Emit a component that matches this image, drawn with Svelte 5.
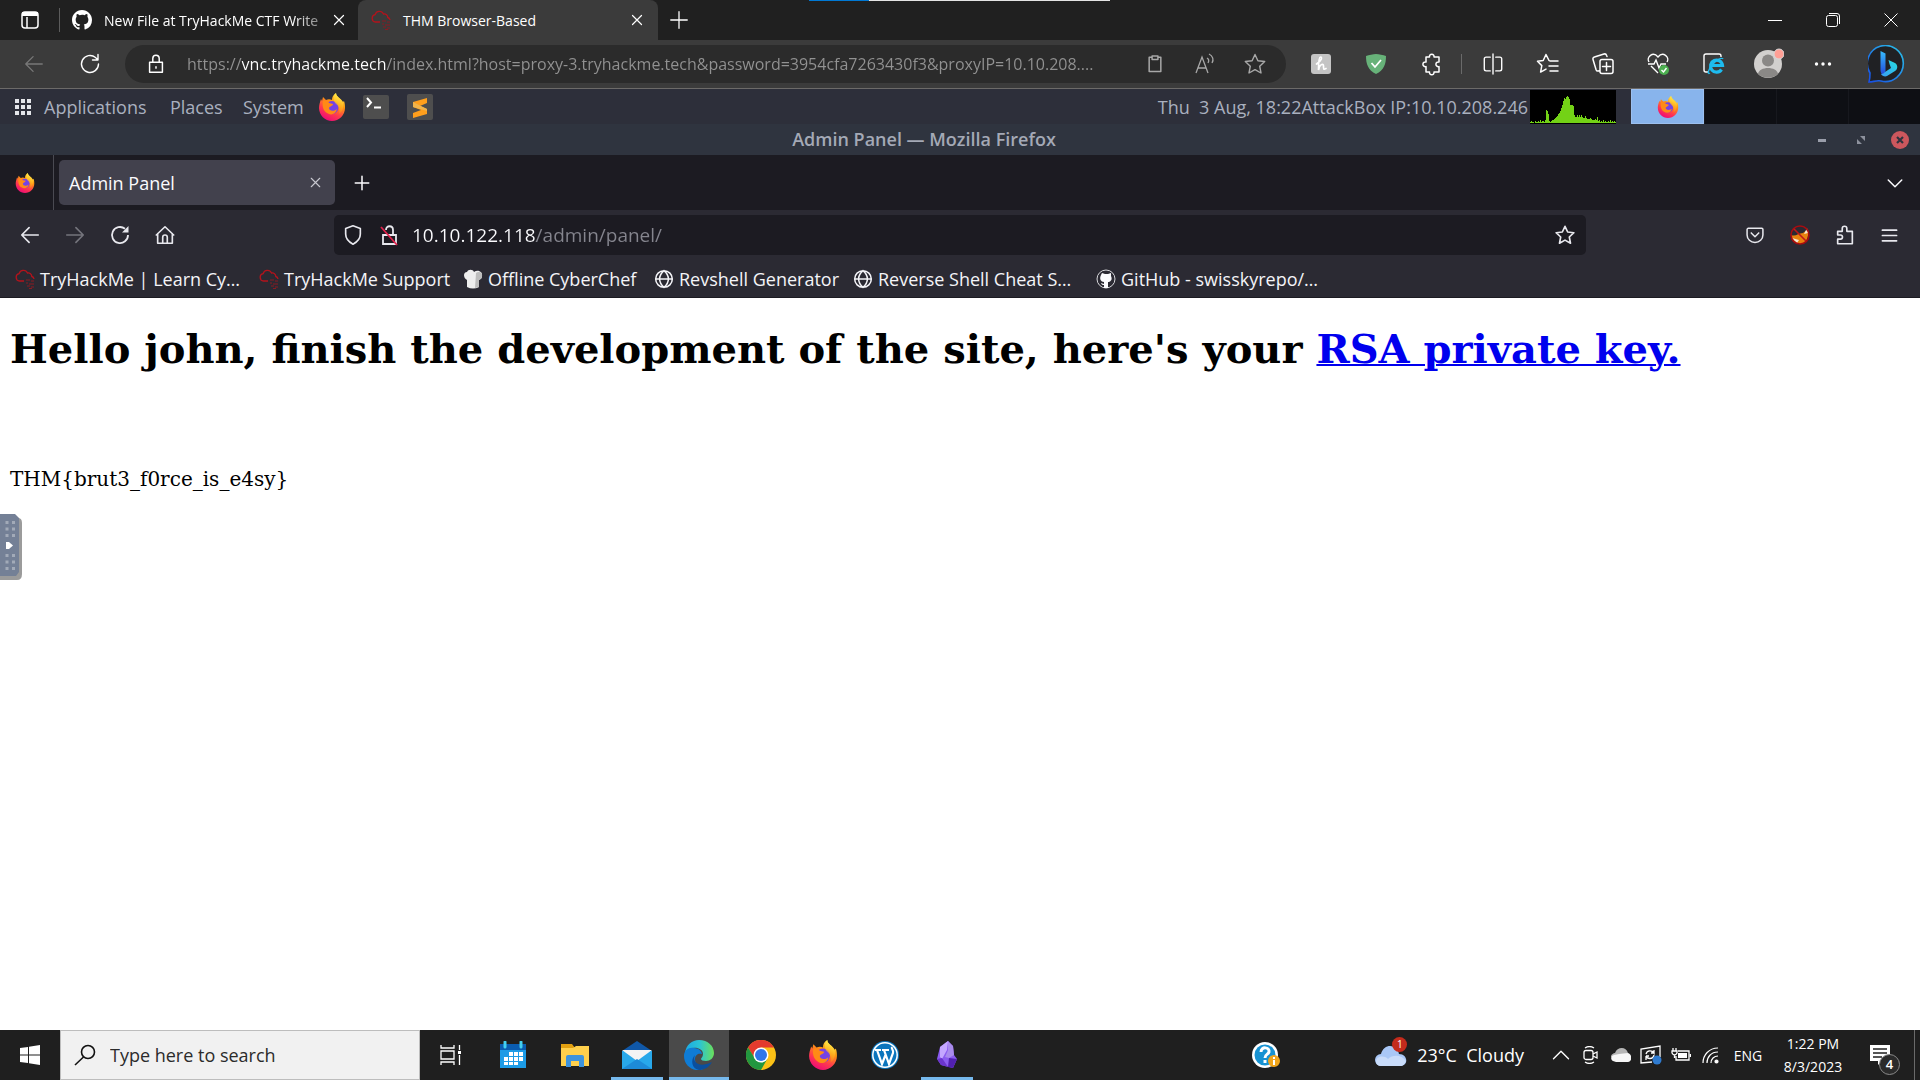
<script>
  let address = $state('https://vnc.tryhackme.tech/index.html?host=proxy-3.tryhackme.tech&password=3954cfa7263430f3&proxyIP=10.10.208....');
  let location = $state('10.10.122.118/admin/panel/');
  let query = $state('');

  const icons = {
    close: 'M6 6l12 12M18 6L6 18',
    plus: 'M12 3v18M3 12h18',
    back: 'M21 12H3M11 4l-8 8 8 8',
    forward: 'M3 12h18M13 4l8 8-8 8',
    reload: 'M20.500 12a8.500 8.500 0 1 1-3-6.500L20 8M20 2.500V8h-5.500',
    lock: 'M5 10h14v11H5zM8.500 10V6a3.500 3.500 0 0 1 7 0v4M12 15v1.500',
    clipboard: 'M8 4H5v17h14V4h-3M8.500 2.500h7v4h-7z',
    star: 'M12 2.500l2.900 6.200 6.800.8-5 4.700 1.300 6.800-6-3.400-6 3.400 1.300-6.800-5-4.700 6.800-.8z',
    puzzle: 'M7 5h3.500a2.300 2.300 0 1 1 4.500 0H20v5a2.400 2.400 0 1 0 0 4.600V20h-5a2.300 2.300 0 1 1-4.500 0H7v-5.400a2.400 2.400 0 1 1 0-4.600z',
    split: 'M9 4.500H4.500a2 2 0 0 0-2 2v11a2 2 0 0 0 2 2H9M15 4.500h4.500a2 2 0 0 1 2 2v11a2 2 0 0 1-2 2H15M12 1v22',
    favorites: 'M13 8.500l-3-6-2.800 6-5.700.8 4.300 4.300-1.200 6.500 5.400-3M14 9h8M13 14h9M14 19h8',
    collections: 'M9 18.500l-1.500.5a2 2 0 0 1-2.400-1.300L2 7.500A2 2 0 0 1 3.400 5L13 2a2 2 0 0 1 2.500 1.300l.5 1.200M11 7.500h9a2 2 0 0 1 2 2v10a2 2 0 0 1-2 2h-9a2 2 0 0 1-2-2v-10a2 2 0 0 1 2-2zM15.500 10.500v8M11.500 14.500h8',
    home: 'M4 10.500V21h16V10.500M2.500 12L12 3l9.500 9M9.500 21v-6.500a2.500 2.500 0 0 1 5 0V21',
    shield: 'M12 2l8 3v6c0 5-3 8.500-8 11-5-2.500-8-6-8-11V5z',
    pocket: 'M4 4h16a1.500 1.500 0 0 1 1.500 1.500V12a9.500 9 0 0 1-19 0V5.500A1.500 1.500 0 0 1 4 4zM7.500 9.500L12 14l4.500-4.500',
    extension: 'M4 8h5V5a2.500 2.500 0 0 1 5 0v3h6v13.500H4v-5h3a2.200 2.200 0 1 0 0-4.500H4z',
    menu: 'M2 4.500h20M2 12h20M2 19.500h20',
    down: 'M3 8l9 9 9-9',
    up: 'M2 17l10-10 10 10',
    globe: 'M12 2a10 10 0 1 0 0 20 10 10 0 0 0 0-20zM12 2c-7 6-7 14 0 20M12 2c7 6 7 14 0 20M2 12h20'
  };

  const links = [
    { icon: 'cloud', label: 'TryHackMe | Learn Cy…', width: 244 },
    { icon: 'cloud', label: 'TryHackMe Support', width: 204 },
    { icon: 'chef', label: 'Offline CyberChef', width: 191 },
    { icon: 'globe', label: 'Revshell Generator', width: 199 },
    { icon: 'globe', label: 'Reverse Shell Cheat S…', width: 243 },
    { icon: 'github', label: 'GitHub - swisskyrepo/…', width: 230 }
  ];

  const load = [1,2,1,1,0,2,1,1,2,1,3,1,2,2,1,3,13,12,9,2,1,2,3,3,4,5,6,7,9,10,12,15,18,22,25,24,26,27,26,24,18,18,18,17,8,6,6,8,6,8,6,8,6,5,5,7,5,4,4,4,5,4,3,3,3,4,3,6,2,3,1,2,1,3,1,2,1,1,2,1,3,1,2,1,2,1];
</script>

{#snippet line(name, size, weight)}
  <svg width={size} height={size} viewBox="0 0 24 24" fill="none" stroke="currentColor" stroke-width={weight} stroke-linejoin="round" stroke-linecap="round" aria-hidden="true"><path d={icons[name]} /></svg>
{/snippet}

{#snippet firefox(size)}
  <svg width={size} height={size} viewBox="0 0 28 28" aria-hidden="true">
    <defs>
      <linearGradient id="ffBody" x1=".8" y1="0" x2=".3" y2="1"><stop offset="0" stop-color="#fff44f" /><stop offset=".35" stop-color="#ff980e" /><stop offset=".7" stop-color="#ff3750" /><stop offset="1" stop-color="#eb0878" /></linearGradient>
      <linearGradient id="ffFlame" x1=".7" y1="0" x2=".5" y2="1"><stop offset="0" stop-color="#fff44f" /><stop offset="1" stop-color="#ff980e" stop-opacity=".4" /></linearGradient>
    </defs>
    <path fill="url(#ffBody)" d="M3 6l1 2 1-4 3 3c2-1 4-1 6 0 0-3 1-5 4-7 0 4 5 5 7 9l1-1c1 3 1 5 1 7 0 7-6 13-13 13S1 22 1 15c0-3 1-6 2-9z" />
    <circle cx="14" cy="14.500" r="6.500" fill="#7542e5" />
    <path fill="#ff8a16" d="M5 8c3-1 5 0 6 2l4 1c0 2-3 2-4 4 0 3 5 4 8 1-1 5-6 7-10 4-4-2-5-8-4-12z" />
    <path fill="url(#ffFlame)" d="M18 0c0 4 5 5 7 10 1 5-1 9-4 11 1-4 0-8-3-10-3-3-3-8 0-11z" />
  </svg>
{/snippet}

{#snippet cloud()}
  <svg width="20" height="20" viewBox="0 0 20 20" fill="none" aria-hidden="true">
    <path d="M9 12H4.500a3.700 3.700 0 0 1-.4-7.300A4.500 4.500 0 0 1 12.500 4a3.500 3.500 0 0 1 4.300 3.500A3 3 0 0 1 19 10" stroke="#b3131c" stroke-width="1.300" />
    <path d="M11 11h4M16 12h3M11 14h2M14 15h5M12 17h3M16 18h3M14 19.500h3" stroke="#8b1a22" stroke-width="1.200" />
  </svg>
{/snippet}

{#snippet github(size)}
  <svg width={size} height={size} viewBox="0 0 16 16" fill="currentColor" aria-hidden="true"><path d="M8 0C3.580 0 0 3.580 0 8c0 3.540 2.290 6.530 5.470 7.590.4.070.55-.17.55-.38v-1.490c-2.010.37-2.530-.49-2.690-.94-.09-.23-.48-.94-.82-1.130-.28-.15-.68-.52-.01-.53.63-.01 1.080.58 1.230.82.72 1.210 1.870.87 2.330.66.070-.52.28-.87.510-1.070-1.780-.2-3.640-.89-3.640-3.950 0-.87.31-1.590.82-2.150-.08-.2-.36-1.020.08-2.120 0 0 .67-.21 2.200.82A7.600 7.600 0 0 1 8 3.860c.68 0 1.360.09 2 .27 1.530-1.040 2.200-.82 2.200-.82.44 1.100.16 1.920.08 2.120.51.56.82 1.270.82 2.150 0 3.070-1.870 3.750-3.650 3.950.29.25.54.73.54 1.480v2.200c0 .21.15.46.55.38A8 8 0 0 0 16 8c0-4.420-3.580-8-8-8z" /></svg>
{/snippet}

<div class="screen">
  <header class="edge">
    <div class="strip" aria-hidden="true"><i></i></div>
    <div class="edge-tabs">
      <button class="workspaces" aria-label="Tab actions">
        <svg width="20" height="20" viewBox="0 0 20 20" fill="none" stroke="currentColor" stroke-width="1.500" aria-hidden="true"><rect x="2" y="2" width="16" height="16" rx="3" /><path d="M2 4.500h16M2 3.500h16" stroke-width="3" /><path d="M7 7v11" /></svg>
      </button>
      <div class="tab idle">
        {@render github(20)}
        <span class="name fade">New File at TryHackMe CTF Write</span>
        <button aria-label="Close tab">{@render line('close', 18, 1.6)}</button>
      </div>
      <div class="tab current">
        {@render cloud()}
        <span class="name">THM Browser-Based</span>
        <button aria-label="Close tab">{@render line('close', 18, 1.6)}</button>
      </div>
      <button class="new" aria-label="New tab">{@render line('plus', 22, 1.4)}</button>
      <div class="win">
        <button aria-label="Minimize"><svg width="14" height="14" viewBox="0 0 14 14" stroke="currentColor" aria-hidden="true"><path d="M0 7.500h14" /></svg></button>
        <button aria-label="Restore"><svg width="14" height="14" viewBox="0 0 14 14" fill="none" stroke="currentColor" aria-hidden="true"><rect x=".5" y="2.500" width="11" height="11" rx="2" /><path d="M3 .5h8a2.500 2.500 0 0 1 2.500 2.500v8" /></svg></button>
        <button aria-label="Close"><svg width="14" height="14" viewBox="0 0 14 14" stroke="currentColor" aria-hidden="true"><path d="M.5.5l13 13M13.500.5l-13 13" /></svg></button>
      </div>
    </div>
    <div class="edge-bar">
      <button class="nav dim" aria-label="Back">{@render line('back', 22, 1.4)}</button>
      <button class="nav" aria-label="Refresh">{@render line('reload', 24, 1.4)}</button>
      <div class="omni">
        <button class="site" aria-label="Site information">{@render line('lock', 22, 1.6)}</button>
        <input class="url" aria-label="Address" bind:value={address} />
        <button aria-label="Copy">{@render line('clipboard', 20, 1.8)}</button>
        <button aria-label="Read aloud"><svg width="24" height="24" viewBox="0 0 24 24" fill="none" stroke="currentColor" stroke-width="1.300" aria-hidden="true"><path d="M3 21L9 5l6 16M5 16h8M14 6c2 1 2 3 1 5M16 2c4 2 5 6 3 9" /></svg></button>
        <button aria-label="Add to favorites">{@render line('star', 24, 1.4)}</button>
      </div>
      <div class="tools">
        <button aria-label="Honey"><svg width="22" height="22" viewBox="0 0 22 22" aria-hidden="true"><rect x="1" y="1" width="20" height="20" rx="3" fill="#c4c4c4" /><path d="M6.500 11c5-3 6-7 4-7s-2 7-2 13c1-6 5-7 5-4s0 4 2.500 2.500" fill="none" stroke="#fff" stroke-width="1.700" stroke-linecap="round" /></svg></button>
        <button aria-label="Ad blocker"><svg width="22" height="22" viewBox="0 0 22 22" aria-hidden="true"><path fill="#67b279" d="M11 1c3 0 7 1 10 2 0 8-2 14-10 18C3 17 1 11 1 3c3-1 7-2 10-2z" /><path d="M6.500 10l3.500 4 6-7" fill="none" stroke="#fff" stroke-width="1.800" /></svg></button>
        <button aria-label="Extensions">{@render line('puzzle', 24, 1.5)}</button>
        <span class="rule"></span>
        <button aria-label="Split screen">{@render line('split', 22, 1.5)}</button>
        <button aria-label="Favorites">{@render line('favorites', 24, 1.5)}</button>
        <button aria-label="Collections">{@render line('collections', 24, 1.5)}</button>
        <button aria-label="Browser essentials"><svg width="24" height="24" viewBox="0 0 24 24" fill="none" stroke="currentColor" stroke-width="1.400" aria-hidden="true"><path d="M3 10C0 5 7-1 12 5c5-6 12 0 9 5M2 12h6l2-4 3 8 2-4h5M5 14l7 7" /><circle cx="18" cy="18" r="5" fill="#4caf50" stroke="none" /><path d="M15.500 18l2 2 3-4" /></svg></button>
        <button aria-label="Internet Explorer mode"><svg width="24" height="24" viewBox="0 0 24 24" fill="none" aria-hidden="true"><path d="M7 20H5a2 2 0 0 1-2-2V4a2 2 0 0 1 2-2h13a2 2 0 0 1 2 2v1" stroke="currentColor" stroke-width="1.400" /><path d="M20.500 17.500a6 6 0 1 1 1-4h-11" stroke="#1ebbee" stroke-width="3.200" /><path d="M9 21c-3 2-2-3 2-8s10-8 11-6" stroke="#1ebbee" stroke-width="1.400" /></svg></button>
        <button aria-label="Profile"><svg width="32" height="32" viewBox="0 0 32 32" aria-hidden="true"><circle cx="16" cy="16" r="14" fill="#d2d0ce" /><circle cx="16" cy="12.500" r="6" fill="#8a8886" /><path d="M6 26c1-8 19-8 20 0-5 5-15 5-20 0z" fill="#8a8886" /><circle cx="27" cy="6" r="5" fill="#ff9f95" stroke="#d8d8d8" /></svg></button>
        <button aria-label="Settings and more"><svg width="20" height="20" viewBox="0 0 20 20" fill="currentColor" aria-hidden="true"><circle cx="3.500" cy="10" r="1.700" /><circle cx="10" cy="10" r="1.700" /><circle cx="16.500" cy="10" r="1.700" /></svg></button>
      </div>
      <button class="bing" aria-label="Bing Chat"><svg width="38" height="38" viewBox="0 0 38 38" aria-hidden="true">
        <defs><linearGradient id="bing" x1="1" y1="0" x2="0" y2="1"><stop offset="0" stop-color="#2bc4e8" /><stop offset="1" stop-color="#174ae4" /></linearGradient><linearGradient id="bingBar" x2="0" y2="1"><stop stop-color="#37bdff" /><stop offset="1" stop-color="#2247d8" /></linearGradient><linearGradient id="bingFold" x1="1" x2="0" y2="1"><stop stop-color="#25dfe0" /><stop offset="1" stop-color="#3a9bf4" /></linearGradient></defs>
        <path d="M1 37c1-3 1-6 1-9A18 18 0 1 1 13 36c-4-1-8 1-12 1z" fill="#202124" stroke="url(#bing)" stroke-width="1.600" />
        <path d="M12.500 6l5 2.500V26c0 2-1 4-3 4-1-1-2-3-2-5z" fill="url(#bingBar)" /><path d="M20.500 15l6.500 3c3 2 3 6 0 8l-8 5c-2 1-5 0-6-2 2 0 3-1 4-2l6-4-1.500-4z" fill="url(#bingFold)" />
      </svg></button>
    </div>
  </header>

  <nav class="panel" aria-label="Desktop panel">
    <svg class="grid" width="16" height="18" viewBox="0 0 16 18" fill="#e4e6ea" aria-hidden="true"><path d="M0 1h4v4H0zM6 1h4v4H6zM12 1h4v4h-4zM0 7h4v4H0zM6 7h4v4H6zM12 7h4v4h-4zM0 13h4v4H0zM6 13h4v4H6zM12 13h4v4h-4z" /></svg>
    <button class="m1">Applications</button>
    <button class="m2">Places</button>
    <button class="m3">System</button>
    <button class="app" aria-label="Firefox">{@render firefox(28)}</button>
    <button class="app" aria-label="Terminal"><svg width="26" height="24" viewBox="0 0 26 24" aria-hidden="true"><rect width="26" height="24" rx="2" fill="#4e4e4e" /><path d="M4 3l4 4.500L4 12M11 12.500h7" fill="none" stroke="#fff" stroke-width="2" /></svg></button>
    <button class="app" aria-label="Sublime Text"><svg width="26" height="26" viewBox="0 0 26 26" aria-hidden="true"><rect width="26" height="26" rx="2" fill="#4e4e4e" /><path d="M20 4v5l-7 3 7 3v5L6 24v-5l8-3-8-3V8z" fill="#ff9f1c" /><path d="M6 8v5l14 4v-2z" fill="#f0b44c" /></svg></button>
    <span class="clock">Thu&nbsp; 3 Aug, 18:22AttackBox IP:10.10.208.246</span>
    <svg class="load" width="86" height="34" viewBox="0 0 86 34" shape-rendering="crispEdges" aria-hidden="true"><rect width="86" height="34" fill="#000" />{#each load as h, i}<rect x={i} y={33 - h} width="1" height={h} fill="#73d216" />{/each}</svg>
    <div class="spaces">
      <button class="on" aria-label="Workspace 1">{@render firefox(22)}</button>
      <button aria-label="Workspace 2"></button>
      <button aria-label="Workspace 3"></button>
      <button aria-label="Workspace 4"></button>
    </div>
  </nav>

  <div class="title">
    <span>Admin Panel — Mozilla Firefox</span>
    <button aria-label="Minimize window"><svg width="16" height="16" viewBox="0 0 16 16" aria-hidden="true"><path d="M4 7h8v3H4z" fill="#9a9eaa" /></svg></button>
    <button aria-label="Maximize window"><svg width="16" height="16" viewBox="0 0 16 16" fill="#8d919d" aria-hidden="true"><path d="M7 4h5v5zM4 7v5h5z" /></svg></button>
    <button aria-label="Close window"><svg width="18" height="18" viewBox="0 0 18 18" aria-hidden="true"><circle cx="9" cy="9" r="9" fill="#cc575d" /><path d="M6 6l6 6M12 6l-6 6" stroke="#2f343f" stroke-width="2.200" /></svg></button>
  </div>

  <div class="ff-tabs">
    <span class="view">{@render firefox(20)}</span>
    <div class="ff-tab"><span>Admin Panel</span><button aria-label="Close Admin Panel">{@render line('close', 17, 1.6)}</button></div>
    <button class="ff-new" aria-label="Open a new tab">{@render line('plus', 18, 2)}</button>
    <button class="list" aria-label="List all tabs">{@render line('down', 18, 2)}</button>
  </div>

  <div class="ff-bar">
    <button class="step" aria-label="Go back">{@render line('back', 22, 1.8)}</button>
    <button class="step faint" aria-label="Go forward">{@render line('forward', 22, 1.8)}</button>
    <button class="step" aria-label="Reload page"><svg width="22" height="22" viewBox="0 0 22 22" fill="none" stroke="currentColor" stroke-width="1.800" aria-hidden="true"><path d="M19 11a8 8 0 1 1-3-6.200" /><path d="M19.500 2v6.500H13z" fill="currentColor" stroke="none" /></svg></button>
    <button class="step" aria-label="Home">{@render line('home', 22, 1.8)}</button>
    <div class="loc">
      <button aria-label="Tracking protection">{@render line('shield', 22, 1.8)}</button>
      <button aria-label="Connection not secure"><svg width="22" height="22" viewBox="0 0 22 22" fill="none" stroke="currentColor" stroke-width="1.800" aria-hidden="true"><path d="M5 11h13v9H5zM8 6c0-5 7-5 7 0v5" /><path d="M3 3l16 18" stroke="#e2224c" /></svg></button>
      <input aria-label="Search or enter address" bind:value={location} />
      <button aria-label="Bookmark this page">{@render line('star', 22, 1.8)}</button>
    </div>
    <div class="ff-tools">
      <button aria-label="Pocket">{@render line('pocket', 20, 1.8)}</button>
      <button aria-label="FoxyProxy"><svg width="20" height="20" viewBox="0 0 20 20" aria-hidden="true"><path d="M1 10c0 6 5 9 9 9 6 0 9-6 8-15l-5 4C8 8 6 12 1 10z" fill="#e8820e" /><path d="M17 3l1 5-4 1zM2 13l5 5 2-3z" fill="#f5e6d0" /><circle cx="10" cy="10" r="9" fill="none" stroke="#a80c10" stroke-width="1.600" /><path d="M4 4l12 12" stroke="#c01818" stroke-width="1.600" /></svg></button>
      <button aria-label="Extensions">{@render line('extension', 22, 1.8)}</button>
      <button aria-label="Open application menu">{@render line('menu', 17, 2.400)}</button>
    </div>
  </div>

  <nav class="marks" aria-label="Bookmarks">
    {#each links as l}
      <a href="#{l.icon}" style:width="{l.width}px">
        {#if l.icon === 'cloud'}{@render cloud()}
        {:else if l.icon === 'github'}<svg width="20" height="20" viewBox="0 0 20 20" aria-hidden="true"><circle cx="10" cy="10" r="9" fill="none" stroke="#d8d8dc" /><path d="M5 6l1-2 3 1h3l3-1v3c2 4-1 6-3 6v6H8v-3c-3 0-3-2-3-2l3 1v-2c-3 0-5-3-3-7z" fill="#fbfbfe" /></svg>
        {:else if l.icon === 'chef'}<svg width="20" height="20" viewBox="0 0 20 20" aria-hidden="true"><path d="M4 18V11C0 9 0 3 4 3c1-3 6-3 7 0 4-3 9 0 8 4 0 2-1 3-3 4v7c-4 2-8 2-12 0z" fill="#eee" /><path d="M13 4c2-2 7-1 6 3 0 2-1 3-3 4v7l-4 1z" fill="#bdbdbd" /></svg>
        {:else}{@render line('globe', 20, 1.8)}{/if}
        <span>{l.label}</span>
      </a>
    {/each}
  </nav>

  <main>
    <h1>Hello john, finish the development of the site, here's your <a href="#key">RSA private key.</a></h1>
    <p>THM{'{'}brut3_f0rce_is_e4sy{'}'}</p>
    <button class="handle" aria-label="Open control bar"><svg width="22" height="66" viewBox="0 0 22 66" aria-hidden="true">
      <path d="M0 4h18q4 0 4 5v51q0 6-5 6H0z" fill="#9b9b9b" /><path d="M0 0h15l4 4v54l-3 4H0z" fill="#748096" />
      <path d="M7 7v16M13.500 7v16M7 40v16M13.500 40v16" stroke="#a2aab8" stroke-width="3" stroke-dasharray="3 3.500" /><path d="M6 28h3l4 3.500L9 35H6z" fill="#fff" />
    </svg></button>
  </main>

  <footer>
    <button class="start" aria-label="Start"><svg width="20" height="20" viewBox="0 0 20 20" fill="#fff" aria-hidden="true"><path d="M0 3l8-1v7.500H0zM9 1.800L20 0v9.500H9zM0 10.500h8V18l-8-1zM9 10.500h11V20L9 18.200z" /></svg></button>
    <label class="search"><svg width="22" height="22" viewBox="0 0 22 22" fill="none" stroke="#111" stroke-width="1.600" aria-hidden="true"><circle cx="14" cy="8" r="6.500" /><path d="M9.500 13L1 21" /></svg><input aria-label="Search" placeholder="Type here to search" bind:value={query} /></label>
    <div class="apps">
      <button aria-label="Task View"><svg width="22" height="20" viewBox="0 0 22 20" fill="none" stroke="#fff" stroke-width="1.300" aria-hidden="true"><path d="M1 0v3h13V0M1 20v-3h13v3M1 6h13v8H1zM19.500 0v5M19.500 10v10" /><path d="M18 6h3v3h-3z" fill="#fff" stroke="none" /></svg></button>
      <button aria-label="Calendar"><svg width="28" height="28" viewBox="0 0 28 28" aria-hidden="true"><path d="M1 3h26v24H1z" fill="#1c9be6" /><path d="M1 3h26v6H1z" fill="#0a5cb0" /><path d="M10 11h4v4h-4zM15 11h4v4h-4zM20 11h4v4h-4zM5 16h4v4H5zM10 16h4v4h-4zM15 16h4v4h-4zM20 16h4v4h-4zM5 21h4v3H5zM10 21h4v3h-4zM15 21h4v3h-4z" fill="#fff" /><path d="M9.500 10v15M14.500 10v15M19.500 10v15M4 15.500h21M4 20.500h21" stroke="#1c9be6" /><path d="M6 1v5M22 1v5" stroke="#43d0f0" stroke-width="3" stroke-linecap="round" /></svg></button>
      <button aria-label="File Explorer"><svg width="28" height="24" viewBox="0 0 28 24" aria-hidden="true"><path d="M0 1h11l3 4H0z" fill="#e2a010" /><path d="M0 5h12l3-2h13v20H0z" fill="#ffd04c" /><path d="M5 24V14q0-2 2-2h14q2 0 2 2v10h-5v-6h-8v6z" fill="#3d93dc" /></svg></button>
      <button class="run" aria-label="Mail"><svg width="32" height="28" viewBox="0 0 32 28" aria-hidden="true"><path d="M1 10L16 0l15 10z" fill="#1058a8" /><path d="M1 10h30v18H1z" fill="#28a8ea" /><path d="M1 9h30L16 20z" fill="#f4f4f4" /><path d="M1 28l15-10 15 10z" fill="#1d8bd8" /></svg></button>
      <button class="run active" aria-label="Microsoft Edge"><svg width="30" height="30" viewBox="0 0 30 30" aria-hidden="true">
        <defs><linearGradient id="edgeTop"><stop stop-color="#1ba9e5" /><stop offset=".5" stop-color="#2bc4d4" /><stop offset="1" stop-color="#6be05a" /></linearGradient></defs>
        <path d="M1 13C2 5 8 0 15 0c9 0 15 6 15 13 0 5-4 8-8 8-3 0-5-1-5-2s2-2 2-5c0-7-13-9-18-1z" fill="url(#edgeTop)" /><path d="M0 16C0 10 5 7 10 8c5 0 8 4 8 6-7-2-9 6-5 11 2 3 5 5 7 4-10 4-20-3-20-13z" fill="#0f7cd6" /><path d="M11 15c-3 6 3 14 17 7-3 6-9 8-13 8-7-1-9-10-4-15z" fill="#0b4f9d" /></svg></button>
      <button aria-label="Google Chrome"><svg width="30" height="30" viewBox="0 0 30 30" aria-hidden="true"><circle cx="15" cy="15" r="15" fill="#fbc116" /><path d="M2 7.500A15 15 0 0 1 28 7.500H15L9 19z" fill="#e33b2e" /><path d="M2 7.500A15 15 0 0 0 15 30l6.500-11.500H9z" fill="#22973f" /><circle cx="15" cy="15" r="7.500" fill="#fff" /><circle cx="15" cy="15" r="6" fill="#2f76e8" /></svg></button>
      <button aria-label="Mozilla Firefox">{@render firefox(30)}</button>
      <button aria-label="WordPress"><svg width="28" height="28" viewBox="0 0 28 28" aria-hidden="true"><circle cx="14" cy="14" r="14" fill="#0b75bd" /><circle cx="14" cy="14" r="12.200" fill="none" stroke="#fff" stroke-width="1.500" /><path d="M4 9h6M11 9h7M6 9l5 14 3.500-9M13 9l5 14 4-11c1-3-2-4-1-6" fill="none" stroke="#fff" stroke-width="2.200" /></svg></button>
      <button class="run" aria-label="Obsidian"><svg width="20" height="28" viewBox="0 0 20 28" aria-hidden="true"><path d="M11 0l5 5 1 9 3 4-4 9-12-3-4-6 3-12z" fill="#8b5cf0" /><path d="M11 0l-1 9-5 9-2-2V6z" fill="#c4a7ff" /><path d="M11 0l5 5 1 9-5 3-4-1 3-7z" fill="#a98bec" /><path d="M0 18l5-1 6 9-7-2z" fill="#6b35cd" /><path d="M12 17l8 1-4 9-5-1z" fill="#5120b0" /></svg></button>
    </div>
    <div class="tray">
      <button class="help" aria-label="Help"><svg width="28" height="28" viewBox="0 0 28 28" aria-hidden="true"><circle cx="13" cy="14" r="13" fill="#fff" /><circle cx="13" cy="14" r="10.500" fill="#1792d2" /><path d="M9 11c0-6 9-5 8 0-1 3-4 2-4 6M13 19v3" fill="none" stroke="#fff" stroke-width="3" /><circle cx="22" cy="20" r="6" fill="#f0a51c" /><path d="M22 16v2M22 19v5" stroke="#fff" stroke-width="2" /></svg></button>
      <button class="weather"><span class="sky"><svg width="32" height="22" viewBox="0 0 32 22" aria-hidden="true"><path d="M6 21a6 6 0 0 1 0-12C9-2 22-1 24 9c9 0 10 12 1 12z" fill="#a9c7f6" /><path d="M1 17c0-6 8-7 12-3 5-5 14-4 18 2-1 3-3 5-6 5H6c-3 0-5-2-5-4z" fill="#c9dcfa" /></svg><b>1</b></span><span>23°C&nbsp; Cloudy</span></button>
      <button class="slot" aria-label="Show hidden icons">{@render line('up', 18, 1.8)}</button>
      <button class="slot" aria-label="Meet Now"><svg width="16" height="18" viewBox="0 0 16 18" fill="none" stroke="#fff" stroke-width="1.300" aria-hidden="true"><rect x="1" y="4.500" width="9" height="9" rx="2" /><path d="M10 8l4-2v6l-4-2M2 2c3-2 6-2 9 0M2 16c3 2 6 2 9 0" /></svg></button>
      <button class="slot" aria-label="OneDrive"><svg width="20" height="14" viewBox="0 0 20 14" aria-hidden="true"><path d="M0 9c0-3 3-4 4-4 2-6 11-7 13 0L8 13z" fill="#b5b5b5" /><path d="M2 13c-3-2-2-5 1-6l5-1 9-1c5 2 4 9 0 9H5z" fill="#f6f6f6" /></svg></button>
      <button class="slot" aria-label="Updates"><svg width="22" height="20" viewBox="0 0 22 20" fill="none" stroke="#fff" stroke-width="1.300" aria-hidden="true"><path d="M12 17L1 18V4l19-3v11M6 9c1-4 6-4 8-1V5M14 8h-3M14 10c-1 5-7 4-8 1v4M6 11h3" /><circle cx="17" cy="15" r="4.500" fill="#2f7bd0" stroke="none" /></svg></button>
      <button class="slot" aria-label="Battery"><svg width="20" height="14" viewBox="0 0 20 14" fill="none" stroke="#fff" stroke-width="1.300" aria-hidden="true"><path d="M7 3h11v9H5V8M19.500 6v3M1 3h5v2q-1 2-2.500 2T1 5zM2 3V0M5 3V0M3.500 7v3" /><path d="M7 5h9v5H7z" fill="#fff" stroke="none" /></svg></button>
      <button class="slot" aria-label="Network"><svg width="18" height="18" viewBox="0 0 18 18" fill="none" stroke="#fff" stroke-width="1.200" aria-hidden="true"><path d="M1 17C1 9 7 2 16 2M5 17c0-6 4-11 11-11M9 17c0-4 3-7 7-7" /><circle cx="14.500" cy="15.500" r="1.500" fill="#fff" /></svg></button>
      <button class="lang">ENG</button>
      <button class="time"><span>1:22 PM</span><span>8/3/2023</span></button>
      <button class="notes" aria-label="4 notifications"><svg width="20" height="20" viewBox="0 0 20 20" aria-hidden="true"><path d="M0 0h20v16h-8l-4 4v-4H0z" fill="#fff" /><path d="M3 4h14M3 8h14M3 12h9" stroke="#1f1f1f" stroke-width="1.300" /></svg><b>4</b></button>
    </div>
  </footer>
</div>

<style>
  :global(body) { background: #fff; }
  .screen { display: flex; flex-direction: column; min-height: 100vh; font-family: "Open Sans", "Noto Sans", sans-serif; font-size: 14px; color: #fff; }
  button { display: flex; align-items: center; justify-content: center; flex: none; margin: 0; padding: 0; border: 0; background: none; color: inherit; font: inherit; }
  svg { display: block; flex: none; }
  input { flex: 1; min-width: 0; padding: 0; border: 0; outline: 0; background: none; font: inherit; color: inherit; }

  .edge { position: relative; border-bottom: 1px solid #6c6a68; }
  .strip { position: absolute; top: 0; left: 809px; width: 301px; height: 1px; background: #e4e4e4; }
  .strip i { display: block; width: 60px; height: 1px; background: #0078d4; }
  .edge-tabs { display: flex; height: 40px; background: #202020; }
  .workspaces { width: 60px; border-right: 1px solid #5c5c5c; height: 24px; margin: 8px 0; }
  .tab { display: flex; align-items: center; gap: 12px; box-sizing: border-box; }
  .tab.idle { width: 298px; padding: 0 10px 0 12px; }
  .tab.idle button { margin-left: -8px; }
  .tab.current { width: 300px; padding: 0 12px 0 13px; background: #3b3b3b; border-radius: 8px 8px 0 0; }
  .name { flex: 1; white-space: nowrap; }
  .fade { mask-image: linear-gradient(90deg, #000 85%, rgba(0, 0, 0, .3)); }
  .new { width: 42px; }
  .win { display: flex; margin-left: auto; }
  .win button { width: 58px; }
  .edge-bar { display: flex; align-items: center; height: 48px; background: #3b3b3b; }
  .nav { width: 44px; }
  .nav:first-child { width: 68px; }
  .dim { color: #787878; }
  .omni { flex: 1; display: flex; align-items: center; height: 38px; border-radius: 19px; background: #2b2b2b; color: #a8a8a8; margin-left: 13px; padding-right: 6px; }
  .omni button { width: 50px; }
  .omni .site { width: 62px; color: #fff; }
  .url { font-size: 16px; color: #9a9a9a; -webkit-text-fill-color: transparent; background: linear-gradient(90deg, #929292 55px, #fff 55px 199px, #929292 199px); background-clip: text; }
  .tools { display: flex; align-items: center; padding: 0 4px 0 7px; }
  .tools button { width: 55px; }
  .rule { width: 1px; height: 20px; margin: 0 3px; background: #6a6a6a; }
  .bing { width: 66px; }

  .panel { display: flex; align-items: center; height: 35px; background: #2d2f3a; color: #a9b0bf; font-size: 18px; }
  .grid { margin: 0 13px 0 15px; }
  .panel button { justify-content: flex-start; }
  .panel .m1 { width: 126px; } .panel .m2 { width: 73px; } .panel .m3 { width: 67px; }
  .panel .app { width: 44px; justify-content: center; }
  .clock { margin-left: auto; padding-right: 2px; white-space: nowrap; }
  .load { margin-right: 15px; }
  .spaces { display: flex; align-self: stretch; }
  .panel .spaces button { width: 72px; justify-content: center; background: #0e0f14; border-left: 1px solid #17181e; box-sizing: border-box; }
  .panel .spaces .on { width: 73px; background: #88b4ec; border: 1px solid #9cc0f0; }

  .title { display: flex; align-items: center; height: 31px; padding: 0 1px 0 46px; background: #2f343f; color: #a4a9b6; font-size: 18px; line-height: 31px; font-weight: 600; }
  .title span { flex: 1; text-align: center; }
  .title button { width: 39px; }

  .ff-tabs { display: flex; align-items: center; height: 55px; background: #1c1b22; color: #fbfbfe; font-size: 18px; }
  .view { display: flex; align-items: center; align-self: stretch; width: 38px; padding-left: 15px; border-right: 1px solid #4a4a52; }
  .ff-tab { display: flex; align-items: center; justify-content: space-between; width: 255px; height: 45px; margin-left: 5px; padding: 0 11px 0 10px; border-radius: 5px; background: #42414d; }
  .ff-tab button { color: #c8c8d0; }
  .ff-new { width: 54px; }
  .list { width: 50px; margin-left: auto; }

  .ff-bar { display: flex; align-items: center; height: 50px; padding-left: 7px; background: #2b2a33; color: #e8e8ee; font-size: 19px; }
  .step { width: 45px; }
  .faint { color: #74747c; }
  .loc { flex: 1; display: flex; align-items: center; height: 40px; margin-left: 147px; padding: 0 3px 0 1px; border-radius: 5px; background: #1c1b22; }
  .loc button { width: 36px; }
  .loc input { margin-left: 5px; background: linear-gradient(90deg, #fbfbfe 124px, #85858e 124px); background-clip: text; -webkit-text-fill-color: transparent; }
  .ff-tools { display: flex; padding: 0 8px 0 146px; }
  .ff-tools button { width: 45px; }

  .marks { display: flex; align-items: center; height: 37px; padding: 0 0 0 15px; background: #2b2a33; color: #f4f4f8; font-size: 18px; border-bottom: 1px solid #1c1b22; }
  .marks a { display: flex; align-items: center; gap: 5px; box-sizing: border-box; color: inherit; text-decoration: none; white-space: nowrap; }

  main { position: relative; flex: 1; padding: 26px 10px; background: #fff; color: #000; font-family: "DejaVu Serif", serif; font-size: 20px; }
  h1 { margin: 0; font-size: 40px; line-height: 50px; white-space: nowrap; }
  h1 a { color: #0000ee; text-decoration-thickness: 2px; }
  p { margin: 93px 0 0; line-height: 24px; }
  .handle { position: absolute; left: 0; top: 216px; }

  footer { display: flex; height: 50px; background: #1f1f1f; }
  .start { width: 60px; }
  .search { display: flex; align-items: center; gap: 14px; box-sizing: border-box; width: 360px; padding: 0 13px; border: 1px solid #bdbdbd; background: #f1f1f1; color: #2b2b2b; font-size: 18px; }
  .search input::placeholder { color: #2b2b2b; opacity: 1; }
  .apps { display: flex; }
  .apps button { box-sizing: border-box; width: 62px; border: solid transparent; border-width: 0 5px; background-clip: padding-box; position: relative; }
  .apps .active { background-color: #4a4a4a; border-width: 0 1px; }
  .run::after { content: ""; position: absolute; left: 0; right: 0; bottom: 0; height: 3px; background: #76b9ed; }
  .tray { display: flex; align-items: center; margin-left: auto; }
  .help { margin-right: 95px; }
  .weather { gap: 10px; font-size: 18px; margin-right: 22px; white-space: nowrap; }
  .sky { position: relative; padding-top: 2px; }
  .sky b { position: absolute; right: 0; top: -6px; width: 15px; height: 15px; border-radius: 50%; background: #c42b1c; font-size: 10px; line-height: 15px; font-weight: 400; text-align: center; }
  .slot { width: 30px; }
  .lang { width: 40px; margin: 0 12px 0 2px; }
  .time { flex-direction: column; width: 66px; line-height: 23px; }
  .notes { position: relative; width: 69px; height: 50px; border-right: 1px solid #6a6a6a; margin-right: 5px; }
  .notes b { position: absolute; right: 14px; bottom: 5px; width: 19px; height: 19px; border: 1px solid #8a8a8a; border-radius: 50%; background: #2b2b2b; font-size: 13px; line-height: 19px; font-weight: 600; text-align: center; }
</style>
